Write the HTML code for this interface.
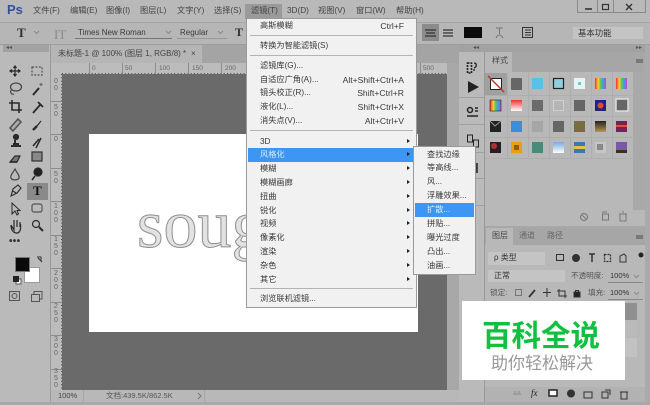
<!DOCTYPE html>
<html><head><meta charset="utf-8"><style>
html,body{margin:0;padding:0;width:650px;height:405px;overflow:hidden;background:#b9b9b9}
#r{position:relative;width:650px;height:405px;overflow:hidden;filter:blur(.35px);font-family:"Liberation Sans","Noto Sans CJK SC",sans-serif;color:#333;font-size:8px}
#r div,#r span,#r svg{position:absolute}
.t{white-space:nowrap;line-height:12px;height:12px}
.m{font-size:8.2px;color:#3a3a3a;white-space:nowrap;line-height:12px}
.k{font-size:8.6px;color:#3a3a3a;text-align:right;right:12px;left:auto;white-space:nowrap;line-height:12px}
.n{font-size:8.2px;color:#444;white-space:nowrap;line-height:12px}
.sep{left:3px;right:3px;height:1px;background:#b4b4b4}
.arr{position:absolute;left:160px;width:0;height:0;border-left:3.5px solid #222;border-top:2.5px solid transparent;border-bottom:2.5px solid transparent}
.ri{font-size:7px;color:#666;text-align:center;width:8px;line-height:7px;white-space:normal;left:52px}
</style></head><body><div id="r">
<div style="left:0;top:0;width:650px;height:22px;background:#b9b9b9"></div>
<div style="left:0;top:22px;width:650px;height:1px;background:#a5a5a5"></div>
<div style="left:0;top:23px;width:650px;height:21px;background:#b6b6b6"></div>
<div style="left:0;top:44px;width:650px;height:1px;background:#9d9d9d"></div>
<div class="t" style="left:7px;top:2px;font-size:13px;line-height:15px;height:15px;font-weight:bold;color:#35509a">Ps</div>
<span class="n" style="left:33px;top:5px">文件(F)</span><span class="n" style="left:70px;top:5px">编辑(E)</span><span class="n" style="left:106px;top:5px">图像(I)</span><span class="n" style="left:140px;top:5px">图层(L)</span><span class="n" style="left:177px;top:5px">文字(Y)</span><span class="n" style="left:214px;top:5px">选择(S)</span>
<div style="left:245px;top:4px;width:37px;height:15px;background:#9a9a9a"></div>
<span class="n" style="left:251px;top:5px">滤镜(T)</span><span class="n" style="left:287px;top:5px">3D(D)</span><span class="n" style="left:318px;top:5px">视图(V)</span><span class="n" style="left:356px;top:5px">窗口(W)</span><span class="n" style="left:396px;top:5px">帮助(H)</span>
<svg style="left:577px;top:0" width="70" height="14"><path d="M.5 0V12.5H68.500V0M20.500 0V12.5M36.500 0V12.5" fill="none" stroke="#8a8a8a"/><path d="M8 9H15" stroke="#333" stroke-width="1.6"/><rect x="25.500" y="4.500" width="6" height="5" fill="none" stroke="#333" stroke-width="1.2"/><path d="M49 4L55 10M55 4L49 10" stroke="#333" stroke-width="1.4"/></svg>
<!-- options -->
<div style="left:17px;top:24px;font:bold 13px/18px 'Liberation Serif',serif;color:#333">T</div>
<div style="left:54px;top:28px;font:13px/14px 'Liberation Serif',serif;color:#888">IT</div>
<span class="t" style="left:78px;top:27px;font-size:8px;color:#3a3a3a">Times New Roman</span>
<div style="left:75px;top:38px;width:97px;height:1px;background:#777"></div>
<span class="t" style="left:180px;top:27px;font-size:8px;color:#3a3a3a">Regular</span>
<div style="left:177px;top:38px;width:50px;height:1px;background:#999"></div>
<svg style="left:32px;top:30px" width="200" height="6" fill="none" stroke="#8a8a8a"><path d="M2 1L4.500 3.500L7 1M134 1L136.500 3.500L139 1M186 1L188.500 3.500L191 1"/></svg>
<div style="left:235px;top:23px;font:bold 12px/18px 'Liberation Serif',serif;color:#333">T</div>
<div style="left:422px;top:24px;width:17px;height:17px;background:#8b8b8b"></div>
<svg style="left:405px;top:26px" width="60" height="14"><path d="M20 4H31M21 7H30M20 10H31M38 4H48M38 7H48M38 10H48" stroke="#333" stroke-width="1.2"/></svg>
<div style="left:464px;top:27px;width:18px;height:11px;background:#0a0a0a"></div>
<svg style="left:495px;top:26px" width="70" height="14"><path d="M1 2H8M4.500 2V8M1 12C3 8 6 8 8 12" stroke="#777" fill="none"/><rect x="27.500" y="1.500" width="10" height="10" fill="none" stroke="#333"/><path d="M30 4H36M30 6.500H36M30 9H36" stroke="#333"/></svg>
<div style="left:573px;top:27px;width:70px;height:12px;background:#c4c4c4"></div>
<span class="t" style="left:578px;top:27px;font-size:8.4px;color:#333">基本功能</span>
<!-- tabs row -->
<div style="left:51px;top:45px;width:408px;height:18px;background:#a4a4a4"></div>
<div style="left:51px;top:45px;width:151px;height:18px;background:#b5b5b5"></div>
<span class="t" style="left:58px;top:48px;font-size:8px;color:#444">未标题-1 @ 100% (图层 1, RGB/8) *</span>
<span class="t" style="left:191px;top:48px;font-size:8px;color:#444">×</span>
<!-- tools panel -->
<div style="left:0;top:45px;width:50px;height:360px;background:#bababa"></div>
<div style="left:3px;top:45px;width:46px;height:7px;background:#a2a2a2"></div>
<div style="left:50px;top:45px;width:1px;height:360px;background:#9a9a9a"></div>
<span class="t" style="left:6px;top:42px;font-size:6px;color:#555">◂◂</span>
<!-- rulers -->
<div style="left:447px;top:63px;width:12px;height:339px;background:#a8a8a8"></div>
<div style="left:51px;top:63px;width:396px;height:11px;background:#bcbcbc"></div>
<div style="left:51px;top:74px;width:11px;height:316px;background:#bcbcbc"></div>
<svg style="left:51px;top:63px" width="396" height="11"><path d="M11 10.500H396" stroke="#555" stroke-width="1" stroke-dasharray="1 2.3"/><path d="M38.500 0V11M71.500 0V11M104.500 0V11M137.500 0V11M170.500 0V11M203.500 0V11M237.500 0V11M270.500 0V11M303.500 0V11M336.500 0V11M369.500 0V11" stroke="#8c8c8c"/></svg>
<span style="left:92px;top:65px;font-size:6.5px;color:#666;line-height:8px">0</span><span style="left:125px;top:65px;font-size:6.5px;color:#666;line-height:8px">50</span><span style="left:159px;top:65px;font-size:6.5px;color:#666;line-height:8px">100</span><span style="left:192px;top:65px;font-size:6.5px;color:#666;line-height:8px">150</span><span style="left:225px;top:65px;font-size:6.5px;color:#666;line-height:8px">200</span><span style="left:423px;top:65px;font-size:6.5px;color:#666;line-height:8px">500</span>
<svg style="left:51px;top:74px" width="11" height="316"><path d="M10.500 0V316" stroke="#555" stroke-dasharray="1 2.3"/><path d="M0 27.500H11M0 60.500H11M0 94.500H11M0 127.500H11M0 161.500H11M0 194.500H11M0 228.500H11M0 261.500H11M0 295.500H11" stroke="#8c8c8c"/></svg>
<div class="ri" style="top:78px">0<br>0</div><div class="ri" style="top:104px">5<br>0</div><div class="ri" style="top:136px">0</div><div class="ri" style="top:171px">5<br>0</div><div class="ri" style="top:203px">1<br>0<br>0</div><div class="ri" style="top:236px">1<br>5<br>0</div><div class="ri" style="top:270px">2<br>0<br>0</div><div class="ri" style="top:303px">2<br>5<br>0</div><div class="ri" style="top:336px">3<br>0<br>0</div><div class="ri" style="top:368px">3<br>5<br>0</div>
<!-- canvas -->
<div style="left:62px;top:74px;width:385px;height:316px;background:#6a6a6a"></div>
<div style="left:89px;top:134px;width:329px;height:198px;background:#fff"></div>
<div style="left:137px;top:184px;font:68px/80px 'Liberation Serif',serif;color:#e2e2e2;-webkit-text-stroke:1px #8f8f8f;white-space:nowrap">sougou</div>
<!-- status -->
<div style="left:51px;top:390px;width:408px;height:12px;background:#b8b8b8"></div>
<div style="left:83px;top:390px;width:1px;height:12px;background:#a5a5a5"></div>
<div style="left:204px;top:390px;width:1px;height:12px;background:#a5a5a5"></div>
<span class="t" style="left:58px;top:384px;height:24px;line-height:24px;font-size:7.5px;color:#444">100%</span>
<span class="t" style="left:106px;top:384px;height:24px;line-height:24px;font-size:7.5px;color:#555">文档:439.5K/862.5K</span>
<svg style="left:196px;top:392px" width="6" height="8" fill="none" stroke="#777"><path d="M2 1L5 4L2 7"/></svg>
<div style="left:0;top:402px;width:650px;height:3px;background:#a8a8a8"></div>
<!-- tool icons -->
<div style="left:27px;top:183px;width:21px;height:17px;background:#8a8a8a"></div>
<svg style="left:0;top:60px" width="50" height="250" fill="none" stroke="#2a2a2a" stroke-width="1.2">
<path d="M15 6V16M10 11H20M13.500 8L15 6L16.500 8M13.500 14L15 16L16.500 14M12 9.500L10 11L12 12.500M18 9.500L20 11L18 12.500"/>
<rect x="32" y="7" width="10" height="8" stroke-dasharray="2 1.4" stroke="#555"/>
<ellipse cx="16" cy="27" rx="5.500" ry="4" stroke="#444"/><path d="M11 30C10 33 12 35 14 34" stroke="#444"/>
<path d="M33 35L39 28" stroke-width="2"/><path d="M41 23V26M39.500 24.500H42.500" stroke="#666"/>
<path d="M12 40V50H22M9 43H19V53" stroke-width="1.6"/>
<path d="M33 53L40 45M38 42L43 47" stroke-width="1.8"/>
<path d="M10 68L18 59L21 62L13 71Z" fill="#aaa" stroke="#555" stroke-width="1.6"/>
<path d="M33 70L37 66" stroke-width="2.4"/><path d="M37 66L41 61" stroke-width="1.2"/>
<path d="M11 86H21M13 84H19M15 84V80" stroke-width="2"/><circle cx="16" cy="77" r="2.500" fill="#2a2a2a"/>
<path d="M33 86L39 79M41 78L36 88" stroke-width="1.500"/>
<path d="M10 102L15 96H20L17 102Z" fill="#777"/><path d="M10 102H17" stroke-width="1.6"/>
<rect x="32" y="92" width="10" height="9" fill="#888" stroke="#333"/>
<path d="M15 109C12 114 10 116 11 118C12 120.500 18 120.500 19 118C20 116 17 113 15 109Z" stroke="#444"/>
<circle cx="38" cy="112" r="4" fill="#222"/><path d="M35 116L32 120" stroke-width="1.6"/>
<path d="M11 136L13 129L18 125L21 128L17 133ZM13 131L16 133" stroke-width="1.1"/>
<path d="M12 143V154L15 151L17 155L18.500 154L17 150.500H20Z" stroke-width="1"/>
<rect x="32" y="144" width="10" height="8" rx="2" stroke="#555"/>
<path d="M11 165L14 170V161M14 167V160M17 167V160M20 167V162M11 165C11 171 14 173 17 173C20 173 21 169 20.500 164"/>
<circle cx="36" cy="164" r="3.500"/><path d="M39 167L43 171" stroke-width="2"/>
</svg>
<div style="left:33px;top:183px;font:bold 13px/16px 'Liberation Serif',serif;color:#111">T</div>
<div style="left:9px;top:238px;font-size:10px;line-height:8px;color:#333;font-weight:bold;letter-spacing:.3px">•••</div>
<!-- swatches -->
<div style="left:24px;top:267px;width:16px;height:16px;background:#fff;border:1px solid #999;box-sizing:border-box"></div>
<div style="left:15px;top:257px;width:15px;height:15px;background:#0a0a0a;border:1px solid #777;box-sizing:border-box"></div>
<svg style="left:10px;top:254px" width="36" height="34"><path d="M27 3H31V7M28 4L32 8" stroke="#333" fill="none"/><rect x="6" y="25" width="5" height="5" fill="#fff" stroke="#555"/><rect x="3" y="22" width="6" height="6" fill="#222"/></svg>
<svg style="left:8px;top:290px" width="40" height="14" fill="none" stroke="#555"><rect x="1.500" y="1.500" width="10" height="9"/><circle cx="6.500" cy="6" r="2.500"/><rect x="23.500" y="4.500" width="8" height="7"/><path d="M26 4V1.500H34V9H32"/></svg>
<!-- right docks -->
<div style="left:459px;top:45px;width:191px;height:357px;background:#b3b3b3"></div>
<div style="left:459px;top:45px;width:191px;height:7px;background:#a2a2a2"></div>
<div style="left:459px;top:52px;width:25px;height:350px;background:#bababa"></div>
<div style="left:484px;top:52px;width:1px;height:350px;background:#999"></div>
<div style="left:645px;top:45px;width:5px;height:357px;background:#aaa"></div>
<div style="left:459px;top:97px;width:25px;height:1px;background:#a0a0a0"></div>
<div style="left:459px;top:124px;width:25px;height:1px;background:#a0a0a0"></div>
<div style="left:459px;top:152px;width:25px;height:1px;background:#a0a0a0"></div>
<div style="left:459px;top:178px;width:25px;height:1px;background:#a0a0a0"></div>
<div style="left:459px;top:205px;width:25px;height:1px;background:#a0a0a0"></div>
<div style="left:476px;top:163px;width:2px;height:10px;background:#444"></div>
<span class="t" style="left:473px;top:42px;font-size:6px;color:#555">◂◂</span>
<span class="t" style="left:636px;top:42px;font-size:6px;color:#555">▸▸</span>
<svg style="left:464px;top:58px" width="20" height="105" fill="none" stroke="#222"><rect x="3.500" y="5" width="4" height="10" stroke-width="1.6" stroke-dasharray="2 1"/><path d="M10 5C13 5 13 9 10 10M10 13V11" stroke-width="1.3"/><path d="M4 23L15 29L4 35Z" fill="#222" stroke="none"/><circle cx="6" cy="52" r="2.500" stroke-width="1.500"/><path d="M11 50H14M11 53H14M3 58H14" stroke-width="1.500"/><rect x="3.500" y="77" width="5" height="7"/><rect x="9.500" y="82" width="5" height="7"/></svg>
<!-- styles panel -->
<div style="left:485px;top:52px;width:160px;height:174px;background:#b8b8b8"></div>
<div style="left:485px;top:52px;width:160px;height:20px;background:#a6a6a6"></div>
<div style="left:633px;top:72px;width:12px;height:138px;background:#a9a9a9"></div>
<div style="left:485px;top:52px;width:27px;height:20px;background:#b8b8b8"></div>
<span class="t" style="left:492px;top:55px;font-size:8px;color:#444">样式</span>
<div style="left:636px;top:59px;width:7px;height:4px;background:#7a7a7a"></div>
<div style="left:485px;top:73px;width:22px;height:22px;background:#a0a0a0"></div>
<svg style="left:485px;top:73px" width="148" height="88">
<defs>
<linearGradient id="a" x1="0" x2="1"><stop offset="0" stop-color="#e33"/><stop offset=".3" stop-color="#fc3"/><stop offset=".5" stop-color="#5c5"/><stop offset=".75" stop-color="#49e"/><stop offset="1" stop-color="#c4c"/></linearGradient>
<linearGradient id="b" x1="0" y1="0" x2="0" y2="1"><stop offset="0" stop-color="#e33"/><stop offset="1" stop-color="#fff"/></linearGradient>
<linearGradient id="c" x1="0" y1="0" x2="0" y2="1"><stop offset="0" stop-color="#7ad"/><stop offset="1" stop-color="#fff"/></linearGradient>
<linearGradient id="d" x1="0" y1="0" x2="0" y2="1"><stop offset="0" stop-color="#222"/><stop offset="1" stop-color="#b89650"/></linearGradient>
</defs>
<path d="M22.500 0V85M43.500 0V85M64.500 0V85M85.500 0V85M106.500 0V85M127.500 0V85M0 22.500H148M0 43.500H148M0 64.500H148M0 85.500H148" stroke="#aeaeae"/>
<rect x="5.500" y="5.500" width="11" height="11" fill="#fff" stroke="#222"/><path d="M3 3L19 19" stroke="#b33" stroke-width="1.4"/>
<rect x="26" y="5" width="11" height="12" rx="1" fill="#666"/>
<rect x="47" y="5" width="11" height="11" fill="#55c3e8"/>
<rect x="68.500" y="5.500" width="10" height="10" fill="#8ccfe0" stroke="#222" stroke-width="1.200"/>
<rect x="89" y="5" width="11" height="11" fill="#e6f4f4"/><rect x="93" y="9" width="3" height="3" fill="#6cc"/>
<rect x="110" y="5" width="11" height="11" fill="url(#a)"/>
<rect x="131" y="5" width="11" height="11" fill="url(#a)"/>
<rect x="5" y="27" width="11" height="11" fill="url(#a)" stroke="#222" stroke-width=".6"/>
<rect x="26" y="27" width="11" height="11" fill="url(#b)"/>
<rect x="47" y="27" width="11" height="11" fill="#6b6b6b"/>
<rect x="68.500" y="27.500" width="10" height="10" fill="#b5b5b5" stroke="#cfcfcf"/>
<rect x="89" y="27" width="11" height="11" fill="#666"/>
<rect x="110" y="27" width="11" height="11" fill="#23208a"/><circle cx="115.500" cy="32.500" r="3" fill="#e84a2a"/>
<rect x="131" y="26" width="12" height="12" fill="#666" stroke="#ddd" stroke-width="1.500"/>
<rect x="5" y="48" width="11" height="11" fill="#222"/><path d="M5 48L10 53L16 48" stroke="#999" fill="none"/>
<rect x="26" y="48" width="11" height="11" fill="#3a8ed8"/>
<rect x="47" y="48" width="11" height="11" fill="#a6a6a6"/>
<rect x="68" y="48" width="11" height="11" fill="#666"/>
<rect x="89" y="48" width="11" height="11" fill="#7a6c42"/>
<rect x="110" y="48" width="11" height="11" fill="url(#d)"/>
<rect x="131" y="48" width="11" height="11" fill="#7a2055"/><rect x="131" y="52" width="11" height="2" fill="#e05040"/>
<rect x="5" y="69" width="11" height="11" fill="#2a1c20"/><circle cx="9" cy="73" r="3" fill="#a33"/>
<rect x="26" y="69" width="11" height="11" fill="#e8a010"/><rect x="29" y="72" width="5" height="5" fill="#9a5a10"/>
<rect x="47" y="69" width="11" height="11" fill="#4a8a7a"/>
<rect x="68" y="69" width="11" height="11" fill="url(#c)"/>
<rect x="89" y="69" width="11" height="11" fill="#3a78b0"/><rect x="89" y="73" width="11" height="3" fill="#e8c040"/>
<rect x="110" y="69" width="11" height="11" fill="#c5c5c5"/><rect x="112" y="71" width="6" height="6" fill="#888"/>
<rect x="131" y="69" width="11" height="11" fill="#7a58a8"/><rect x="131" y="77" width="11" height="3" fill="#332"/>
</svg>
<svg style="left:575px;top:211px" width="60" height="12" fill="none" stroke="#777"><circle cx="9" cy="6" r="3.500"/><path d="M7 4L11 8"/><path d="M27.500 3H33.500V9H27.500ZM27 1H32"/><path d="M44 3H52M45 3V10H51V3M47 1H49"/></svg>
<!-- layers panel -->
<div style="left:485px;top:226px;width:160px;height:2px;background:#a8a8a8"></div>
<div style="left:485px;top:228px;width:160px;height:174px;background:#b8b8b8"></div>
<div style="left:485px;top:228px;width:160px;height:17px;background:#a6a6a6"></div>
<div style="left:486px;top:228px;width:27px;height:17px;background:#b8b8b8"></div>
<span class="t" style="left:492px;top:230px;font-size:8px;color:#444">图层</span><span class="t" style="left:519px;top:230px;font-size:8px;color:#666">通道</span><span class="t" style="left:547px;top:230px;font-size:8px;color:#666">路径</span>
<div style="left:636px;top:235px;width:7px;height:4px;background:#7a7a7a"></div>
<div style="left:488px;top:252px;width:57px;height:13px;background:#c4c4c4"></div>
<span class="t" style="left:494px;top:252px;font-size:8px;color:#333">ρ 类型</span>
<svg style="left:555px;top:251px" width="90" height="16" fill="none" stroke="#333"><rect x="1.500" y="3.500" width="7" height="6"/><circle cx="21" cy="7" r="3.500" fill="#333"/><path d="M34 3H40M37 3V11" stroke-width="1.500"/><rect x="49.500" y="3.500" width="6" height="7" stroke-dasharray="2 1" stroke-width="1.300"/><path d="M65 11V5L69 3L71 5V11Z"/><circle cx="86" cy="4" r="2.500" fill="#222" stroke="none"/></svg>
<div style="left:488px;top:270px;width:77px;height:12px;background:#c4c4c4"></div>
<span class="t" style="left:494px;top:270px;font-size:8px;color:#333">正常</span>
<span class="t" style="left:571px;top:270px;font-size:7.600px;color:#555">不透明度:</span><span class="t" style="left:610px;top:270px;font-size:7.500px;color:#333">100%</span>
<div style="left:608px;top:282px;width:35px;height:1px;background:#888"></div>
<span class="t" style="left:490px;top:287px;font-size:7.600px;color:#555">锁定:</span>
<svg style="left:512px;top:287px" width="75" height="12" fill="none" stroke="#333"><rect x="3.500" y="2.500" width="6" height="6" stroke-dasharray="1 1"/><path d="M17 10L23 3" stroke-width="1.800"/><path d="M35 1V10M31 5.500H39"/><path d="M47 2V9H55M45 4H53V11"/><rect x="62" y="5" width="6" height="5" fill="#222"/><path d="M63.500 5V3.500H66.500V5"/></svg>
<span class="t" style="left:588px;top:287px;font-size:7.600px;color:#555">填充:</span><span class="t" style="left:610px;top:287px;font-size:7.500px;color:#333">100%</span>
<div style="left:608px;top:299px;width:35px;height:1px;background:#888"></div>
<svg style="left:540px;top:254px" width="104" height="46" fill="none" stroke="#8a8a8a"><path d="M-6 0" /><path d="M94 21L96.500 23.500L99 21M94 38L96.500 40.500L99 38"/></svg>
<div style="left:625px;top:303px;width:12px;height:17px;background:#8f8f8f"></div>
<div style="left:625px;top:321px;width:12px;height:16px;background:#bababa"></div>
<div style="left:625px;top:338px;width:12px;height:19px;background:#c2c2c2"></div>
<div style="left:485px;top:387px;width:160px;height:15px;background:#b2b2b2"></div>
<svg style="left:510px;top:388px" width="125" height="14" fill="none" stroke="#333"><path d="M3 6H11M4 4H6M8 4H10" stroke="#888"/><rect x="39" y="2" width="8" height="6" fill="#fff" stroke="#222" stroke-width="1.500"/><circle cx="61" cy="5.500" r="3.500" fill="#333"/><path d="M74 4H82V10H74Z"/><path d="M92 4H98V10H92ZM95 2H100V7"/><path d="M110 4H118M111 4V11H117V4"/></svg>
<span style="left:531px;top:387px;font:italic 9px/12px 'Liberation Serif',serif;color:#222">fx</span>
<!-- filter menu -->
<div style="left:246px;top:18px;width:171px;height:290px;background:#f1f1f1;border:1px solid #9a9a9a;box-sizing:border-box">
<div class="sep" style="top:16px"></div><div class="sep" style="top:36px"></div><div class="sep" style="top:111px"></div><div class="sep" style="top:269px"></div>
<div style="left:1px;top:129px;width:166px;height:14px;background:#3d96f3"></div>
<span class="m" style="left:13px;top:1px">高斯模糊</span><span class="k" style="top:1px">Ctrl+F</span>
<span class="m" style="left:13px;top:21px">转换为智能滤镜(S)</span>
<span class="m" style="left:13px;top:41px">滤镜库(G)...</span>
<span class="m" style="left:13px;top:55px">自适应广角(A)...</span><span class="k" style="top:55px">Alt+Shift+Ctrl+A</span>
<span class="m" style="left:13px;top:68px">镜头校正(R)...</span><span class="k" style="top:68px">Shift+Ctrl+R</span>
<span class="m" style="left:13px;top:82px">液化(L)...</span><span class="k" style="top:82px">Shift+Ctrl+X</span>
<span class="m" style="left:13px;top:96px">消失点(V)...</span><span class="k" style="top:96px">Alt+Ctrl+V</span>
<span class="m" style="left:13px;top:117px">3D</span><span class="m" style="left:13px;top:130px;color:#d8ecff">风格化</span><span class="m" style="left:13px;top:144px">模糊</span><span class="m" style="left:13px;top:158px">模糊画廊</span><span class="m" style="left:13px;top:172px">扭曲</span><span class="m" style="left:13px;top:186px">锐化</span><span class="m" style="left:13px;top:199px">视频</span><span class="m" style="left:13px;top:213px">像素化</span><span class="m" style="left:13px;top:227px">渲染</span><span class="m" style="left:13px;top:241px">杂色</span><span class="m" style="left:13px;top:255px">其它</span>
<span class="m" style="left:13px;top:274px">浏览联机滤镜...</span>
<i class="arr" style="top:120px"></i><i class="arr" style="top:133px"></i><i class="arr" style="top:147px"></i><i class="arr" style="top:161px"></i><i class="arr" style="top:175px"></i><i class="arr" style="top:189px"></i><i class="arr" style="top:202px"></i><i class="arr" style="top:216px"></i><i class="arr" style="top:230px"></i><i class="arr" style="top:244px"></i><i class="arr" style="top:258px"></i>
</div>
<!-- submenu -->
<div style="left:413px;top:146px;width:63px;height:129px;background:#f1f1f1;border:1px solid #9a9a9a;box-sizing:border-box">
<div style="left:1px;top:56px;width:59px;height:14px;background:#3d96f3"></div>
<span class="m" style="left:13px;top:2px">查找边缘</span><span class="m" style="left:13px;top:15px">等高线...</span><span class="m" style="left:13px;top:29px">风...</span><span class="m" style="left:13px;top:43px">浮雕效果...</span><span class="m" style="left:13px;top:57px;color:#d8ecff">扩散...</span><span class="m" style="left:13px;top:71px">拼贴...</span><span class="m" style="left:13px;top:85px">曝光过度</span><span class="m" style="left:13px;top:99px">凸出...</span><span class="m" style="left:13px;top:113px">油画...</span>
</div>
<!-- watermark -->
<div style="left:462px;top:301px;width:163px;height:79px;background:#fff"></div>
<div style="left:482px;top:315px;width:130px;font-size:29.500px;line-height:38px;font-weight:bold;color:#12c040;white-space:nowrap;font-family:'Noto Sans CJK SC',sans-serif">百科全说</div>
<div style="left:491px;top:351px;width:110px;font-size:17px;line-height:22px;color:#999;white-space:nowrap;font-family:'Noto Sans CJK SC',sans-serif">助你轻松解决</div>
</div></body></html>
